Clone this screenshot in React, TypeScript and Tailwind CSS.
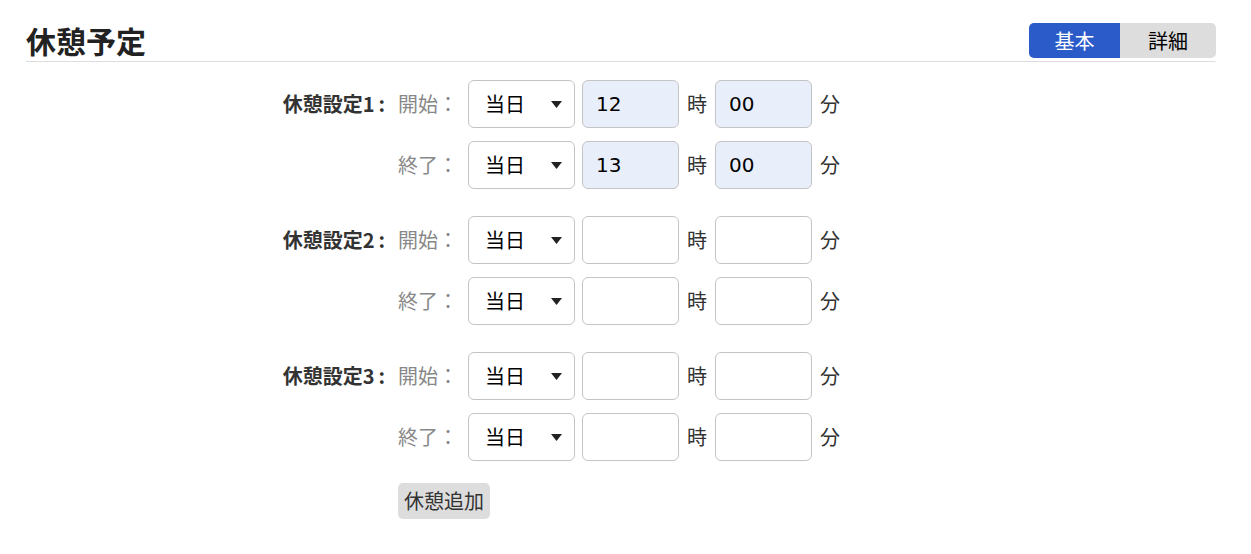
import React from "react";

const font = { fontFamily: '"Noto Sans CJK JP", "Noto Sans", sans-serif' };

function Select() {
  return (
    <div className="w-[107px] h-[48px] border border-[#c4c4c4] rounded-[6px] bg-white flex items-center justify-between pl-[16px] pr-[12px]">
      <span className="text-[20px] text-black">当日</span>
      <svg width="11" height="7" viewBox="0 0 11 7">
        <polygon points="0,0 11,0 5.5,7" fill="#222" />
      </svg>
    </div>
  );
}

function NumInput({ value }: { value?: string }) {
  return (
    <div
      className={`w-[97px] h-[48px] border border-[#c4c4c4] rounded-[6px] flex items-center pl-[13px] text-[20px] text-black ${
        value ? "bg-[#e8effb]" : "bg-white"
      }`}
      style={value ? { fontFamily: '"DejaVu Sans", sans-serif', fontSize: 20 } : undefined}
    >
      {value}
    </div>
  );
}

function Row({
  n,
  sub,
  h,
  m,
}: {
  n?: number;
  sub: string;
  h?: string;
  m?: string;
}) {
  return (
    <div className="flex items-center h-[48px]">
      <div className="w-[125px] text-right text-[20px] font-bold text-[#333] whitespace-nowrap">
        {n !== undefined && (
          <>
            休憩設定{n}
            <span className="ml-[4px]">:</span>
          </>
        )}
      </div>
      <div className="w-[83px] pl-[13px] text-[20px] text-[#888] whitespace-nowrap">{sub}</div>
      <Select />
      <div className="ml-[7px]">
        <NumInput value={h} />
      </div>
      <span className="mx-[8px] text-[20px] text-[#333] leading-none">時</span>
      <NumInput value={m} />
      <span className="ml-[8px] text-[20px] text-[#333] leading-none">分</span>
    </div>
  );
}

function Set({ n, h1, m1, h2, m2 }: { n: number; h1?: string; m1?: string; h2?: string; m2?: string }) {
  return (
    <div className="flex flex-col gap-[13px]">
      <Row n={n} sub="開始：" h={h1} m={m1} />
      <Row sub="終了：" h={h2} m={m2} />
    </div>
  );
}

export default function App() {
  return (
    <div className="w-[1251px] h-[554px] bg-white" style={font}>
      <div className="ml-[26px] mr-[35px] pt-[19px] flex items-end justify-between border-b border-[#dddddd]">
        <h1 className="text-[30px] font-bold text-[#222] leading-[42px]">休憩予定</h1>
        <div className="flex h-[35px] rounded-[5px] overflow-hidden mb-[3px] text-[20px]">
          <div className="w-[91px] bg-[#2a5bc8] text-white flex items-center justify-center">基本</div>
          <div className="w-[96px] bg-[#dddddd] text-black flex items-center justify-center">詳細</div>
        </div>
      </div>
      <div className="ml-[260px] mt-[18px] flex flex-col gap-[27px]">
        <Set n={1} h1="12" m1="00" h2="13" m2="00" />
        <Set n={2} />
        <Set n={3} />
      </div>
      <div className="ml-[398px] mt-[22px]">
        <button className="h-[36px] w-[92px] bg-[#dddddd] rounded-[5px] text-[20px] text-[#333] leading-none">休憩追加</button>
      </div>
    </div>
  );
}
